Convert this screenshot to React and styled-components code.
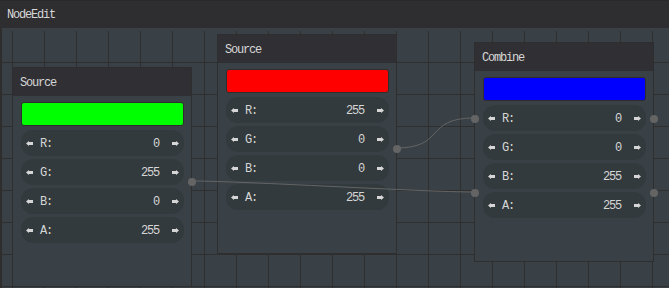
import React from "react";
import styled, { createGlobalStyle } from "styled-components";

const GlobalStyle = createGlobalStyle`
  html, body {
    margin: 0;
    padding: 0;
    width: 669px;
    height: 288px;
    overflow: hidden;
    background: #394146;
  }
  body {
    font-family: "Liberation Mono", "DejaVu Sans Mono", monospace;
    font-size: 12px;
    letter-spacing: -1.2px;
    color: #d6d6d6;
  }
`;

const nodes = [
  {
    id: "a",
    title: "Source",
    color: "#00ff00",
    x: 10,
    y: 36,
    values: [0, 255, 0, 255],
    inputs: [],
    outputs: [114],
  },
  {
    id: "b",
    title: "Source",
    color: "#ff0000",
    x: 215,
    y: 3,
    values: [255, 0, 0, 255],
    inputs: [],
    outputs: [114],
  },
  {
    id: "c",
    title: "Combine",
    color: "#0000ff",
    x: 472,
    y: 11,
    values: [0, 0, 255, 255],
    inputs: [76, 150],
    outputs: [76, 150],
  },
];

const channels = ["R", "G", "B", "A"];

function App() {
  return (
    <Window>
      <GlobalStyle />
      <TitleBar>NodeEdit</TitleBar>
      <Content>
        <Canvas>
          {nodes.map((n) => (
            <Node key={n.id} style={{ left: n.x, top: n.y }}>
              <Header>{n.title}</Header>
              <NodeBody>
                <Swatch $color={n.color} />
                {channels.map((c, i) => (
                  <Property key={c}>
                    <ArrowLeft />
                    <PropLabel>{c}:</PropLabel>
                    <PropValue>{n.values[i]}</PropValue>
                    <ArrowRight />
                  </Property>
                ))}
              </NodeBody>
              {n.inputs.map((t) => (
                <Slot key={"i" + t} $side="left" style={{ top: t - 4 }} />
              ))}
              {n.outputs.map((t) => (
                <Slot key={"o" + t} $side="right" style={{ top: t - 4 }} />
              ))}
            </Node>
          ))}
          <Links viewBox="0 0 667 257">
            <path d="M190 150 C240 150, 422 161, 472 161" />
            <path d="M394 117 C444 117, 422 87, 472 87" />
          </Links>
        </Canvas>
      </Content>
    </Window>
  );
}

function ArrowLeft() {
  return (
    <Arrow width="7" height="7" viewBox="0 0 7 7">
      <polygon points="0,3.5 3,1 3,2 7,2 7,5 3,5 3,6" />
    </Arrow>
  );
}

function ArrowRight() {
  return (
    <Arrow width="7" height="7" viewBox="0 0 7 7">
      <polygon points="7,3.5 4,1 4,2 0,2 0,5 4,5 4,6" />
    </Arrow>
  );
}

const Window = styled.div`
  display: flex;
  flex-direction: column;
  width: 669px;
  height: 288px;
  background: #394146;
`;

const TitleBar = styled.div`
  height: 28px;
  flex-shrink: 0;
  display: flex;
  align-items: center;
  padding: 1px 0 0 7px;
  background: #2e2e31;
  border-top: 1px solid #29292b;
  box-sizing: border-box;
`;

const Content = styled.div`
  flex: 1;
  display: flex;
  padding-top: 3px;
  border-left: 2px solid #2e2e2e;
`;

const Canvas = styled.div`
  position: relative;
  flex: 1;
  overflow: hidden;
  background-color: #394146;
  background-image: linear-gradient(to right, #2f2f2f 1px, transparent 1px),
    linear-gradient(to bottom, #2f2f2f 1px, transparent 1px);
  background-size: 32px 100%, 100% 32px;
  background-position: 10px 0, 0 31px;
`;

const Node = styled.div`
  position: absolute;
  width: 180px;
  height: 220px;
  box-sizing: border-box;
  border: 1px solid #2e2e2e;
  background: #394146;
  display: flex;
  flex-direction: column;
`;

const Header = styled.div`
  height: 28px;
  flex-shrink: 0;
  box-sizing: border-box;
  display: flex;
  align-items: center;
  padding: 2px 0 0 7px;
  background: #303034;
`;

const NodeBody = styled.div`
  display: flex;
  flex-direction: column;
  gap: 3px;
  padding: 6px 7px 0 8px;
`;

const Swatch = styled.div`
  height: 24px;
  box-sizing: border-box;
  margin-bottom: 1px;
  border: 1px solid #2e2e2e;
  border-radius: 3px;
  background: ${({ $color }) => $color};
`;

const Property = styled.div`
  height: 26px;
  box-sizing: border-box;
  display: flex;
  align-items: center;
  padding: 1px 5px 0;
  border-radius: 12px;
  background: #323a3d;
`;

const Arrow = styled.svg`
  flex-shrink: 0;
  fill: #d6d6d6;
`;

const PropLabel = styled.span`
  margin-left: 7px;
`;

const PropValue = styled.span`
  flex: 1;
  text-align: right;
  margin-right: 13px;
`;

const Slot = styled.div`
  position: absolute;
  width: 8px;
  height: 8px;
  border-radius: 50%;
  background: #646464;
  ${({ $side }) => ($side === "left" ? "left: -4px;" : "right: -5px;")}
`;

const Links = styled.svg`
  position: absolute;
  left: 0;
  top: 0;
  width: 667px;
  height: 257px;
  pointer-events: none;
  fill: none;
  stroke: #646464;
  stroke-width: 1;
`;

export default App;
